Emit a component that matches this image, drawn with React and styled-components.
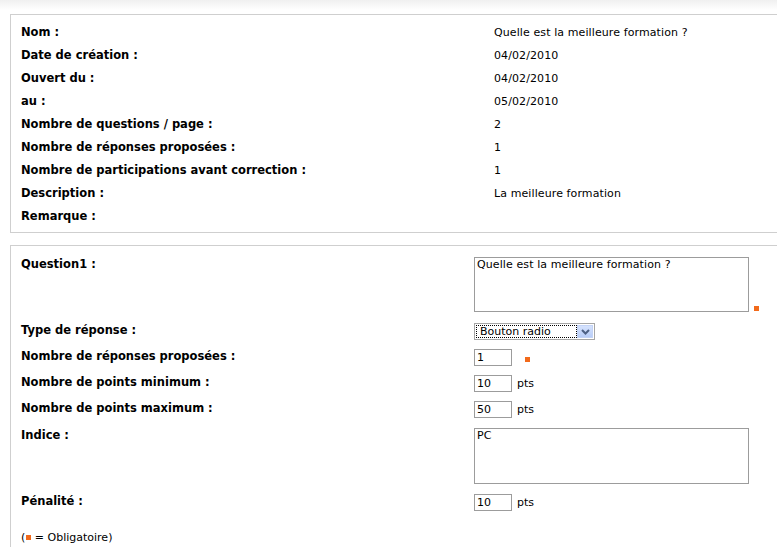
import React from "react";
import styled, { createGlobalStyle } from "styled-components";

const Global = createGlobalStyle`
  html, body { margin: 0; padding: 0; overflow: hidden; background: #fff; }
  body { font-family: "DejaVu Sans", Verdana, sans-serif; font-size: 11px; color: #000; }
  * { box-sizing: border-box; }
`;

const Page = styled.div`
  width: 777px;
  height: 547px;
  overflow: hidden;
`;

const TopShade = styled.div`
  height: 10px;
  background: linear-gradient(#f0f0f0, #fff);
`;

const Content = styled.div`
  padding: 4px 0 0 10px;
  display: flex;
  flex-direction: column;
  gap: 12px;
`;

const Panel = styled.div`
  width: 790px;
  border: 1px solid #cfcfcf;
  padding: ${(p) => p.$pad};
`;

const InfoRow = styled.div`
  display: grid;
  grid-template-columns: 473px 1fr;
  height: 23px;
  line-height: 23px;
`;

const Label = styled.div`
  font-weight: bold;
  font-size: 11.5px;
  white-space: nowrap;
`;

const Value = styled.div`
  font-size: 11px;
  letter-spacing: 0.1px;
  white-space: nowrap;
`;

const FormRow = styled.div`
  display: grid;
  grid-template-columns: 453px 1fr;
  align-items: start;
  margin-top: ${(p) => p.$mt}px;
`;

const FormLabel = styled(Label)`
  line-height: 14px;
`;

const Field = styled.div`
  display: flex;
  align-items: ${(p) => (p.$end ? "flex-end" : "center")};
  gap: 5px;
  font-size: 11px;
`;

const TextArea = styled.div`
  width: 275px;
  height: ${(p) => p.$h}px;
  border: 1px solid #9c9c9c;
  padding: 0px 2px;
  font-size: 11px;
  letter-spacing: 0.1px;
  line-height: 13px;
`;

const Input = styled.div`
  width: 38px;
  height: 17px;
  border: 1px solid #9c9c9c;
  padding: 0 2px;
  font-size: 11px;
  line-height: 15px;
`;

const Req = styled.span`
  display: inline-block;
  width: 5px;
  height: 5px;
  background: #f26a1b;
  margin-left: ${(p) => p.$ml || 0}px;
  margin-bottom: ${(p) => p.$mb || 0}px;
  margin-top: ${(p) => p.$mtop || 0}px;
`;

const Select = styled.div`
  width: 121px;
  height: 17px;
  border: 1px solid #a6a6a6;
  display: flex;
  padding: 1px;
`;

const SelectText = styled.div`
  flex: 1;
  border: 1px dotted #000;
  padding: 0 3px;
  line-height: 11px;
  font-size: 11px;
`;

const SelectBtn = styled.div`
  width: 16px;
  background: linear-gradient(#d5e2fd, #b8cdf8);
  border: 1px solid #c3d3f6;
  display: flex;
  align-items: center;
  justify-content: center;
`;

const Footer = styled.div`
  margin-top: 19px;
  font-size: 11px;
  line-height: 15px;
  display: flex;
  align-items: center;
`;

const info = [
  ["Nom :", "Quelle est la meilleure formation ?"],
  ["Date de création :", "04/02/2010"],
  ["Ouvert du :", "04/02/2010"],
  ["au :", "05/02/2010"],
  ["Nombre de questions / page :", "2"],
  ["Nombre de réponses proposées :", "1"],
  ["Nombre de participations avant correction :", "1"],
  ["Description :", "La meilleure formation"],
  ["Remarque :", ""],
];

export default function App() {
  return (
    <Page>
      <Global />
      <TopShade />
      <Content>
        <Panel $pad="6px 10px 4px 10px">
          {info.map(([l, v]) => (
            <InfoRow key={l}>
              <Label>{l}</Label>
              <Value>{v}</Value>
            </InfoRow>
          ))}
        </Panel>
        <Panel $pad="11px 10px 40px 10px">
          <FormRow $mt={0}>
            <FormLabel>Question1 :</FormLabel>
            <Field $end>
              <TextArea $h={55}>Quelle est la meilleure formation ?</TextArea>
              <Req $mb={1} />
            </Field>
          </FormRow>
          <FormRow $mt={11}>
            <FormLabel>Type de réponse :</FormLabel>
            <Field>
              <Select>
                <SelectText>Bouton radio</SelectText>
                <SelectBtn>
                  <svg width="9" height="6" viewBox="0 0 9 6">
                    <path d="M1 1 L4.5 4.5 L8 1" stroke="#4d6185" strokeWidth="2" fill="none" />
                  </svg>
                </SelectBtn>
              </Select>
            </Field>
          </FormRow>
          <FormRow $mt={9}>
            <FormLabel>Nombre de réponses proposées :</FormLabel>
            <Field>
              <Input>1</Input>
              <Req $ml={8} $mtop={4} />
            </Field>
          </FormRow>
          <FormRow $mt={9}>
            <FormLabel>Nombre de points minimum :</FormLabel>
            <Field>
              <Input>10</Input>
              <span>pts</span>
            </Field>
          </FormRow>
          <FormRow $mt={9}>
            <FormLabel>Nombre de points maximum :</FormLabel>
            <Field>
              <Input>50</Input>
              <span>pts</span>
            </Field>
          </FormRow>
          <FormRow $mt={10}>
            <FormLabel>Indice :</FormLabel>
            <Field>
              <TextArea $h={56}>PC</TextArea>
            </Field>
          </FormRow>
          <FormRow $mt={10}>
            <FormLabel>Pénalité :</FormLabel>
            <Field>
              <Input>10</Input>
              <span>pts</span>
            </Field>
          </FormRow>
          <Footer>
            (<Req $ml={1} />&nbsp;= Obligatoire)
          </Footer>
        </Panel>
      </Content>
    </Page>
  );
}
